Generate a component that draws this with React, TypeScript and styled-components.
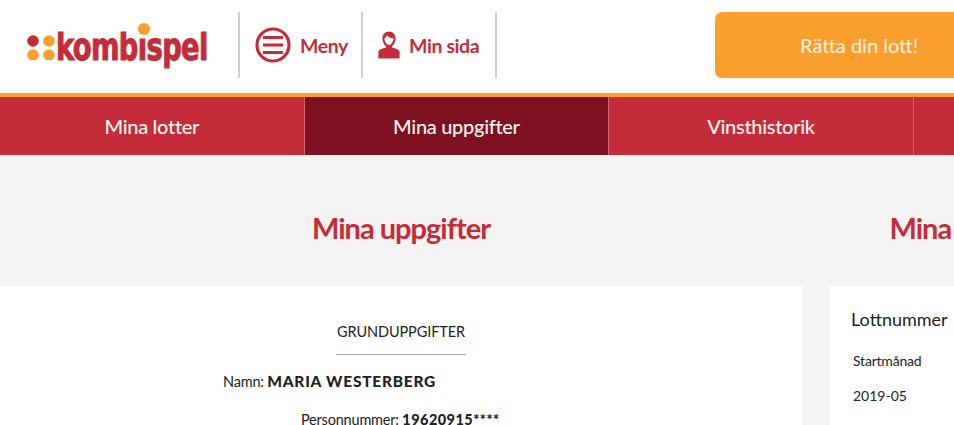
import React from "react";
import styled, { createGlobalStyle } from "styled-components";

const Global = createGlobalStyle`
  html, body { margin: 0; padding: 0; background: #fff; }
  body { width: 954px; height: 425px; overflow: hidden; font-family: Lato, "Open Sans", sans-serif; }
`;

const Page = styled.div`
  width: 954px;
  height: 425px;
  overflow: hidden;
  display: flex;
  flex-direction: column;
`;

const Header = styled.header`
  flex: 0 0 81px;
  box-sizing: content-box;
  padding-top: 12px;
  display: flex;
  align-items: flex-start;
  border-bottom: 4px solid #fa9f2e;
  background: #fff;
`;

const LogoCell = styled.div`
  flex: none;
  width: 238px;
  height: 66px;
  display: flex;
  align-items: center;
  padding-left: 27px;
  box-sizing: border-box;
`;

const LogoDots = styled.svg`
  flex: none;
  width: 30px;
  height: 30px;
`;

const LogoWordWrap = styled.span`
  position: relative;
  flex: none;
  display: block;
  width: 152px;
  height: 44px;
`;

const LogoWord = styled.span`
  position: absolute;
  left: -1px;
  top: 2px;
  font-family: "DejaVu Sans", sans-serif;
  font-weight: 700;
  font-size: 38px;
  line-height: 44px;
  letter-spacing: -0.9px;
  color: #c42c39;
  -webkit-text-stroke: 1.1px #c42c39;
  transform-origin: left center;
  transform: scaleX(0.72);
  white-space: nowrap;
`;

const LogoDot = styled.i`
  position: absolute;
  left: 81px;
  top: 0px;
  width: 12px;
  height: 12px;
  border-radius: 50%;
  background: #fa9f2e;
`;

const HeaderLink = styled.a<{ $w: number }>`
  flex: none;
  width: ${(p) => p.$w}px;
  height: 66px;
  box-sizing: border-box;
  border-left: 2px solid #cfcfcf;
  display: flex;
  align-items: center;
  gap: 9px;
  padding-left: 15px;
  font-size: 19.5px;
  font-weight: 700;
  color: #c42c39;
  letter-spacing: -0.4px;
  white-space: nowrap;
`;

const EndRule = styled.span`
  flex: none;
  width: 2px;
  height: 66px;
  background: #cfcfcf;
`;

const CtaButton = styled.button`
  margin-left: 218px;
  flex: none;
  width: 400px;
  height: 66px;
  border: 0;
  border-radius: 7px;
  background: #fa9f2e;
  color: #fdf3e2;
  font-family: Lato, sans-serif;
  font-size: 20px;
  text-align: left;
  padding: 0 0 0 85px;
`;

const Nav = styled.nav`
  flex: 0 0 58px;
  display: flex;
  background: #c42c39;
`;

const NavTab = styled.div<{ $active?: boolean }>`
  flex: 0 0 304.6px;
  box-sizing: border-box;
  display: flex;
  align-items: center;
  justify-content: center;
  font-size: 20px;
  font-weight: 500;
  letter-spacing: -0.3px;
  color: #fdf5f3;
  background: ${(p) => (p.$active ? "#7d1120" : "transparent")};
  border-right: 1px solid #d5636c;
`;

const TitleBand = styled.section`
  flex: 0 0 131px;
  display: grid;
  grid-template-columns: 802px 252px;
  column-gap: 28px;
  background: #f3f3f2;
`;

const PageTitle = styled.h1`
  margin: 0;
  padding-top: 55px;
  text-align: center;
  font-size: 29px;
  line-height: 36px;
  font-weight: 700;
  color: #c42c39;
  white-space: nowrap;
  letter-spacing: -1px;
`;

const Columns = styled.div`
  flex: 1;
  min-height: 0;
  display: grid;
  grid-template-columns: 802px 1fr;
  column-gap: 28px;
  background: #f3f3f2;
`;

const MainCard = styled.div`
  background: #fff;
  padding-top: 36px;
  color: #222;
`;

const SectionHead = styled.div`
  width: 130px;
  margin: 0 auto;
  box-sizing: border-box;
  padding-bottom: 12px;
  border-bottom: 1px solid #aaa;
  text-align: center;
  font-size: 14.5px;
  line-height: 20px;
  letter-spacing: -0.1px;
  white-space: nowrap;
`;

const InfoRow = styled.div<{ $indent: number; $top: number }>`
  margin-top: ${(p) => p.$top}px;
  padding-left: ${(p) => p.$indent}px;
  font-size: 14.5px;
  line-height: 20px;
  letter-spacing: -0.2px;
  white-space: nowrap;
`;

const Strong = styled.b<{ $size: number; $spread: number }>`
  font-weight: 900;
  font-size: ${(p) => p.$size}px;
  letter-spacing: ${(p) => p.$spread}px;
`;

const SideCard = styled.aside`
  background: #fff;
  padding: 22px 0 0 21px;
  color: #222;
  overflow: hidden;
`;

const SideTitle = styled.div`
  font-size: 18px;
  line-height: 22px;
  white-space: nowrap;
`;

const SideLabel = styled.div`
  margin: 21px 0 0 2px;
  font-size: 14px;
  line-height: 20px;
  letter-spacing: -0.2px;
`;

const SideValue = styled.div`
  margin: 15px 0 0 2px;
  font-size: 14px;
  line-height: 20px;
`;

export default function App() {
  return (
    <Page>
      <Global />
      <Header>
        <LogoCell>
          <LogoDots viewBox="0 0 30 30">
            <circle cx="6" cy="11" r="5.8" fill="#c42c39" />
            <circle cx="22" cy="11" r="5.8" fill="#fa9f2e" />
            <circle cx="6" cy="25" r="5.8" fill="#fa9f2e" />
            <circle cx="22" cy="25" r="5.8" fill="#fa9f2e" />
          </LogoDots>
          <LogoWordWrap>
            <LogoWord>kombıspel</LogoWord>
            <LogoDot />
          </LogoWordWrap>
        </LogoCell>
        <HeaderLink $w={123}>
          <svg width="36" height="36" viewBox="0 0 36 36">
            <circle cx="18" cy="18" r="16" fill="none" stroke="#c42c39" strokeWidth="3.2" />
            <path d="M8 10.500h20M8 18h20M8 25.500h20" stroke="#c42c39" strokeWidth="3" />
          </svg>
          Meny
        </HeaderLink>
        <HeaderLink $w={134}>
          <svg width="22" height="28" viewBox="0 0 22 28" style={{ flex: "none" }}>
            <path
              fill="#c42c39"
              fillRule="evenodd"
              d="M11 .5c4 0 6.600 3 6.600 6.800 0 3.400-1.600 6.600-3.600 8v1.200c3 .8 7 1.600 7.600 4.200v6.800H.4v-6.800c.6-2.600 4.600-3.400 7.600-4.200v-1.200C6 13.900 4.400 10.700 4.400 7.300 4.400 3.500 7 .5 11 .5zM6.400 7.500c.3 3 2.400 6.500 4.600 6.500s4.300-3.500 4.600-6.500C13 7.500 10 6 8.800 4.300 8.300 5.600 7.500 7 6.400 7.500z"
            />
          </svg>
          Min sida
        </HeaderLink>
        <EndRule />
        <CtaButton>Rätta din lott!</CtaButton>
      </Header>
      <Nav>
        <NavTab>Mina lotter</NavTab>
        <NavTab $active>Mina uppgifter</NavTab>
        <NavTab>Vinsthistorik</NavTab>
        <NavTab />
      </Nav>
      <TitleBand>
        <PageTitle>Mina uppgifter</PageTitle>
        <PageTitle>Mina lotter</PageTitle>
      </TitleBand>
      <Columns>
        <MainCard>
          <SectionHead>GRUNDUPPGIFTER</SectionHead>
          <InfoRow $indent={223} $top={16}>
            Namn: <Strong $size={15.5} $spread={0.75}>MARIA WESTERBERG</Strong>
          </InfoRow>
          <InfoRow $indent={301} $top={18}>
            Personnummer: <Strong $size={14.5} $spread={0.45}>19620915****</Strong>
          </InfoRow>
        </MainCard>
        <SideCard>
          <SideTitle>Lottnummer</SideTitle>
          <SideLabel>Startmånad</SideLabel>
          <SideValue>2019-05</SideValue>
        </SideCard>
      </Columns>
    </Page>
  );
}
